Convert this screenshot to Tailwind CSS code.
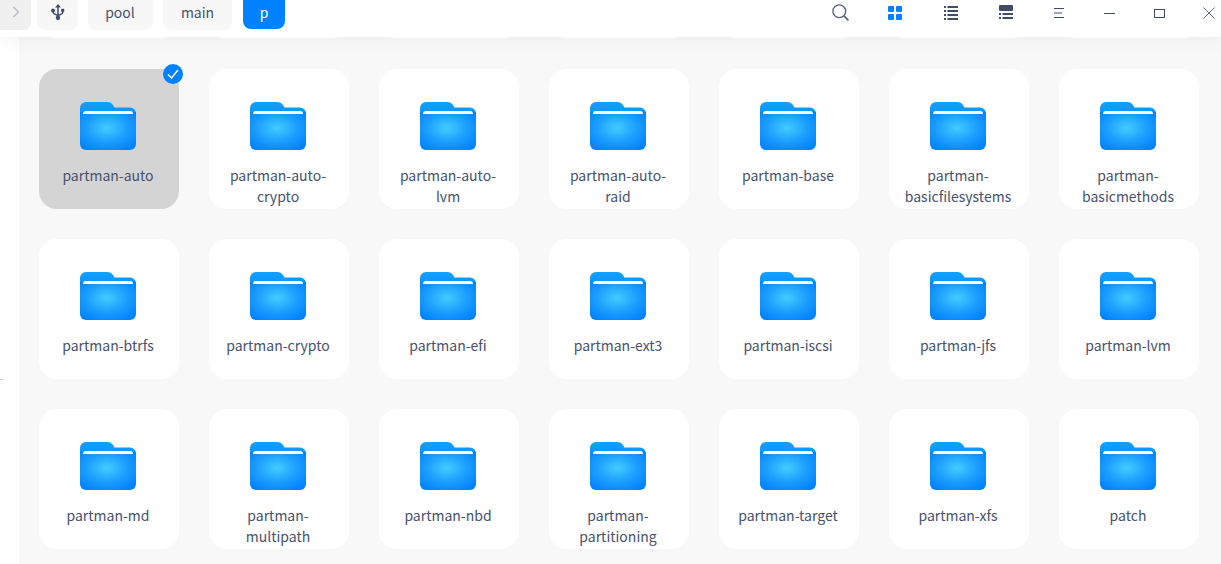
<!DOCTYPE html>
<html lang="en">
<head>
    <meta charset="UTF-8">
    <title>File Manager</title>
    <script src="https://cdn.jsdelivr.net/npm/@tailwindcss/browser@4"></script>
</head>
<body class="w-[1221px] h-[564px] overflow-hidden bg-white text-[#46526e] font-['Noto_Sans_CJK_SC','Noto_Sans',sans-serif]">
    <svg class="absolute w-0 h-0">
        <defs>
            <radialGradient id="folderFill" cx="0.48" cy="0.42" r="0.68">
                <stop offset="0" stop-color="#42cbff"/>
                <stop offset="0.55" stop-color="#1b9dff"/>
                <stop offset="1" stop-color="#0081ff"/>
            </radialGradient>
            <linearGradient id="folderTab" x1="0" y1="0" x2="0" y2="1">
                <stop offset="0" stop-color="#12a0ff"/>
                <stop offset="1" stop-color="#0a8cff"/>
            </linearGradient>
            <symbol id="folder" viewBox="0 0 56 48">
                <path d="M0 6a6 6 0 0 1 6-6h21c3 0 4.500 1 6 3l1.500 2.500H50a6 6 0 0 1 6 6v8H0z" fill="url(#folderTab)"/>
                <path d="M0 10h56v32a6 6 0 0 1-6 6H6a6 6 0 0 1-6-6z" fill="url(#folderFill)"/>
                <path d="M3 12q0-3 3-3h44q3 0 3 3z" fill="#fff"/>
            </symbol>
        </defs>
    </svg>

    <header class="h-[37px] flex items-start bg-white relative z-10 shadow-[0_2px_20px_rgba(0,0,0,0.06)]">
        <div class="w-[31px] h-[30px] pb-[6px] bg-[#f0f0f0] rounded-br-lg flex items-center justify-center">
            <svg class="w-[8px] h-[12px]" viewBox="0 0 8 12" fill="none" stroke="#b4b8c0" stroke-width="1.200"><path d="M1.500 1l5 5-5 5"/></svg>
        </div>
        <div class="w-[41px] h-[30px] pb-[6px] ml-[6px] bg-[#f7f7f7] rounded-b-lg flex items-center justify-center">
            <svg class="w-[14px] h-[16px]" viewBox="0 0 14 16" fill="#414d68">
                <path d="M7 0l3 3.500H4z"/>
                <path d="M7 3v10M2 6.500v1.500q0 1 1 1.600l4 2.100 4-2.100q.7-.5.7-1.400V7" fill="none" stroke="#414d68" stroke-width="1.500"/>
                <circle cx="7" cy="13.800" r="2.200"/>
                <circle cx="2" cy="6.500" r="1.900"/>
                <rect x="10.200" y="4.800" width="3" height="3"/>
            </svg>
        </div>
        <div class="w-[65px] h-[30px] pb-[6px] pr-[1px] ml-[10px] bg-[#f7f7f7] rounded-b-lg flex items-center justify-center text-sm">pool</div>
        <div class="w-[69px] h-[30px] pb-[6px] ml-[10px] bg-[#f7f7f7] rounded-b-lg flex items-center justify-center text-sm">main</div>
        <div class="w-[42px] h-[29px] pb-[5px] ml-[11px] bg-[#0081ff] text-white rounded-b-lg flex items-center justify-center text-sm">p</div>

        <div class="ml-auto flex items-center h-[26px]">
            <svg class="w-[17px] h-[17px] mr-[39px] mb-[1px]" viewBox="0 0 17 17" fill="none" stroke="#56607a" stroke-width="1.300"><circle cx="7.300" cy="7.300" r="6.400"/><path d="M11.900 11.900l4.500 4.500" stroke-width="1.600"/></svg>
            <svg class="w-[14px] h-[14px] mr-[42px]" viewBox="0 0 14 14" fill="#0081ff"><rect width="6" height="6" rx="1"/><rect x="8" width="6" height="6" rx="1"/><rect y="8" width="6" height="6" rx="1"/><rect x="8" y="8" width="6" height="6" rx="1"/></svg>
            <svg class="w-[14px] h-[14px] mr-[41px]" viewBox="0 0 14 14" fill="#414d68"><rect width="2" height="2"/><rect x="3.500" width="10.500" height="2"/><rect y="4" width="2" height="2"/><rect x="3.500" y="4" width="10.500" height="2"/><rect y="8" width="2" height="2"/><rect x="3.500" y="8" width="10.500" height="2"/><rect y="12" width="2" height="2"/><rect x="3.500" y="12" width="10.500" height="2"/></svg>
            <svg class="w-[14px] h-[14px] mr-[41px] mb-[2px]" viewBox="0 0 14 14" fill="#414d68"><rect width="14" height="6" rx="1"/><rect y="8" width="2" height="2"/><rect x="3.500" y="8" width="10.500" height="2"/><rect y="12" width="2" height="2"/><rect x="3.500" y="12" width="10.500" height="2"/></svg>
            <svg class="w-[10px] h-[10px] mr-[40px]" viewBox="0 0 10 10" fill="#414d68"><rect width="10" height="1"/><rect y="4.500" width="8" height="1"/><rect y="9" width="10" height="1"/></svg>
            <svg class="w-[11px] h-[2px] mr-[39px]" viewBox="0 0 11 2" fill="#414d68"><rect y="1" width="11" height="1"/></svg>
            <svg class="w-[11px] h-[10px] mr-[38px] mt-[2px]" viewBox="0 0 11 10" fill="none" stroke="#414d68"><rect x="0.500" y="0.500" width="10" height="8"/></svg>
            <svg class="w-[12px] h-[12px] mr-[6px]" viewBox="0 0 12 12" fill="none" stroke="#414d68" stroke-width="0.800"><path d="M0.500 0.500l11 11M11.500 0.500l-11 11"/></svg>
        </div>
    </header>

    <div class="flex h-[527px]">
        <aside class="w-[19px] bg-white relative">
            <div class="absolute left-0 top-[342px] w-[3px] h-px bg-[#c8c8c8]"></div>
        </aside>
        <main class="flex-1 bg-[#f8f8f8] overflow-hidden pl-[20px]">
            <div class="grid grid-cols-[repeat(7,140px)] auto-rows-[140px] gap-[30px] -mt-[138px] text-sm leading-[21px] text-center">
                <div class="bg-white rounded-[18px]"></div>
                <div class="bg-white rounded-[18px]"></div>
                <div class="bg-white rounded-[18px]"></div>
                <div class="bg-white rounded-[18px]"></div>
                <div class="bg-white rounded-[18px]"></div>
                <div class="bg-white rounded-[18px]"></div>
                <div class="bg-white rounded-[18px]"></div>

                <div class="relative bg-[#d4d4d4] rounded-[18px] flex flex-col items-center pt-[33px] pr-[2px]">
                    <svg class="w-[56px] h-[48px] mb-[15px]"><use href="#folder"/></svg>
                    <span class="w-[116px]">partman-auto</span>
                    <span class="absolute -top-[5px] -right-[4px] w-[20px] h-[20px] rounded-full bg-[#0081ff] flex items-center justify-center">
                        <svg class="w-[12px] h-[10px]" viewBox="0 0 12 10" fill="none" stroke="#fff" stroke-width="1.500"><path d="M1 5.500l3.500 3.500L11 1"/></svg>
                    </span>
                </div>
                <div class="bg-white rounded-[18px] flex flex-col items-center pt-[33px] pr-[2px]"><svg class="w-[56px] h-[48px] mb-[15px]"><use href="#folder"/></svg><span class="w-[116px]">partman-auto-crypto</span></div>
                <div class="bg-white rounded-[18px] flex flex-col items-center pt-[33px] pr-[2px]"><svg class="w-[56px] h-[48px] mb-[15px]"><use href="#folder"/></svg><span class="w-[116px]">partman-auto-lvm</span></div>
                <div class="bg-white rounded-[18px] flex flex-col items-center pt-[33px] pr-[2px]"><svg class="w-[56px] h-[48px] mb-[15px]"><use href="#folder"/></svg><span class="w-[116px]">partman-auto-raid</span></div>
                <div class="bg-white rounded-[18px] flex flex-col items-center pt-[33px] pr-[2px]"><svg class="w-[56px] h-[48px] mb-[15px]"><use href="#folder"/></svg><span class="w-[116px]">partman-base</span></div>
                <div class="bg-white rounded-[18px] flex flex-col items-center pt-[33px] pr-[2px]"><svg class="w-[56px] h-[48px] mb-[15px]"><use href="#folder"/></svg><span class="w-[116px]">partman-basicfilesystems</span></div>
                <div class="bg-white rounded-[18px] flex flex-col items-center pt-[33px] pr-[2px]"><svg class="w-[56px] h-[48px] mb-[15px]"><use href="#folder"/></svg><span class="w-[116px]">partman-basicmethods</span></div>

                <div class="bg-white rounded-[18px] flex flex-col items-center pt-[33px] pr-[2px]"><svg class="w-[56px] h-[48px] mb-[15px]"><use href="#folder"/></svg><span class="w-[116px]">partman-btrfs</span></div>
                <div class="bg-white rounded-[18px] flex flex-col items-center pt-[33px] pr-[2px]"><svg class="w-[56px] h-[48px] mb-[15px]"><use href="#folder"/></svg><span class="w-[116px]">partman-crypto</span></div>
                <div class="bg-white rounded-[18px] flex flex-col items-center pt-[33px] pr-[2px]"><svg class="w-[56px] h-[48px] mb-[15px]"><use href="#folder"/></svg><span class="w-[116px]">partman-efi</span></div>
                <div class="bg-white rounded-[18px] flex flex-col items-center pt-[33px] pr-[2px]"><svg class="w-[56px] h-[48px] mb-[15px]"><use href="#folder"/></svg><span class="w-[116px]">partman-ext3</span></div>
                <div class="bg-white rounded-[18px] flex flex-col items-center pt-[33px] pr-[2px]"><svg class="w-[56px] h-[48px] mb-[15px]"><use href="#folder"/></svg><span class="w-[116px]">partman-iscsi</span></div>
                <div class="bg-white rounded-[18px] flex flex-col items-center pt-[33px] pr-[2px]"><svg class="w-[56px] h-[48px] mb-[15px]"><use href="#folder"/></svg><span class="w-[116px]">partman-jfs</span></div>
                <div class="bg-white rounded-[18px] flex flex-col items-center pt-[33px] pr-[2px]"><svg class="w-[56px] h-[48px] mb-[15px]"><use href="#folder"/></svg><span class="w-[116px]">partman-lvm</span></div>

                <div class="bg-white rounded-[18px] flex flex-col items-center pt-[33px] pr-[2px]"><svg class="w-[56px] h-[48px] mb-[15px]"><use href="#folder"/></svg><span class="w-[116px]">partman-md</span></div>
                <div class="bg-white rounded-[18px] flex flex-col items-center pt-[33px] pr-[2px]"><svg class="w-[56px] h-[48px] mb-[15px]"><use href="#folder"/></svg><span class="w-[116px]">partman-multipath</span></div>
                <div class="bg-white rounded-[18px] flex flex-col items-center pt-[33px] pr-[2px]"><svg class="w-[56px] h-[48px] mb-[15px]"><use href="#folder"/></svg><span class="w-[116px]">partman-nbd</span></div>
                <div class="bg-white rounded-[18px] flex flex-col items-center pt-[33px] pr-[2px]"><svg class="w-[56px] h-[48px] mb-[15px]"><use href="#folder"/></svg><span class="w-[116px]">partman-partitioning</span></div>
                <div class="bg-white rounded-[18px] flex flex-col items-center pt-[33px] pr-[2px]"><svg class="w-[56px] h-[48px] mb-[15px]"><use href="#folder"/></svg><span class="w-[116px]">partman-target</span></div>
                <div class="bg-white rounded-[18px] flex flex-col items-center pt-[33px] pr-[2px]"><svg class="w-[56px] h-[48px] mb-[15px]"><use href="#folder"/></svg><span class="w-[116px]">partman-xfs</span></div>
                <div class="bg-white rounded-[18px] flex flex-col items-center pt-[33px] pr-[2px]"><svg class="w-[56px] h-[48px] mb-[15px]"><use href="#folder"/></svg><span class="w-[116px]">patch</span></div>
            </div>
        </main>
    </div>
</body>
</html>
